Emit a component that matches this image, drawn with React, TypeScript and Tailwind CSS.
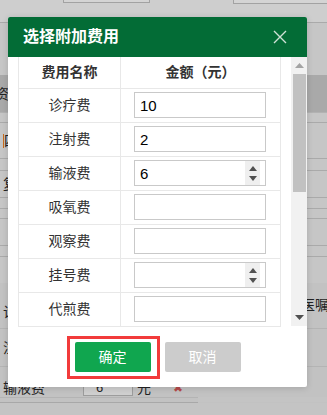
import React from 'react';

interface FeeRow {
    name: string;
    value: string;
    spin?: boolean;
}

const rows: FeeRow[] = [
    { name: '诊疗费', value: '10' },
    { name: '注射费', value: '2' },
    { name: '输液费', value: '6', spin: true },
    { name: '吸氧费', value: '' },
    { name: '观察费', value: '' },
    { name: '挂号费', value: '', spin: true },
    { name: '代煎费', value: '' },
];

const Spinner: React.FC = () => (
    <div className="absolute right-[6px] top-px bottom-px w-[15px] bg-[#efefef] flex flex-col items-center justify-center gap-[5px]">
        <svg width="8" height="5" viewBox="0 0 8 5"><path d="M0 5 L4 0 L8 5 Z" fill="#505050" /></svg>
        <svg width="8" height="5" viewBox="0 0 8 5"><path d="M0 0 L4 5 L8 0 Z" fill="#505050" /></svg>
    </div>
);

const Background: React.FC = () => (
    <div className="flex flex-col text-[14px] text-[#222] leading-none">
        {/* top inputs, mostly scrolled out */}
        <div className="h-[22px] bg-[#cecece] flex items-start">
            <div className="w-[63px]" />
            <div className="w-[87px] h-[3px] border-x border-b border-[#a2a2a2] bg-[#d4d4d4]" />
            <div className="w-[83px]" />
            <div className="flex-1 h-[4px] border-l border-b border-[#a2a2a2] bg-[#d4d4d4]" />
        </div>
        <div className="h-[53px] border-t border-[#aaaaaa] bg-[#c6c6c6]" />
        <div className="h-[37px] bg-[#a9a9a9] flex items-center">
            <span className="ml-[-5px]">资</span>
        </div>
        <div className="h-[10px] border-t border-[#b2b2b2] bg-[#c6c6c6]" />
        <div className="h-[36px] border-t border-[#aaaaaa] bg-[#c6c6c6] flex items-center pl-[3px]">
            <span className="border-l border-[#c86a1c]">四</span>
        </div>
        <div className="h-[12px] border-t border-[#aaaaaa] bg-[#c6c6c6]" />
        <div className="h-[27px] border-t border-[#aaaaaa] bg-[#c6c6c6] flex items-center pl-[3px]">
            <span>复</span>
        </div>
        <div className="h-[11px] border-t border-[#aaaaaa] bg-[#c6c6c6]" />
        <div className="h-[10px] border-t border-[#aaaaaa] bg-[#c6c6c6]" />
        <div className="h-[27px] border-t border-[#aaaaaa] bg-[#c6c6c6]" />
        <div className="h-[11px] border-t border-[#aaaaaa] bg-[#c6c6c6]" />
        <div className="h-[27px] border-t border-[#aaaaaa] bg-[#c6c6c6]" />
        <div className="h-[45px] bg-[#c2c2c2] flex items-start justify-between pt-[15px] pl-[3px]">
            <span className="mt-[7px]">诊</span>
            <span className="mr-[-2px]">医嘱</span>
        </div>
        <div className="h-[38px] border-t border-[#b4b4b4] bg-[#c2c2c2] flex items-center pl-[3px]">
            <span>注</span>
        </div>
        <div className="h-[31px] border-t border-[#b4b4b4] bg-[#c2c2c2] flex items-center pl-[3px] pt-[12px]">
            <span className="w-[80px]">输液费</span>
            <div className="w-[50px] h-[16px] border border-[#9c9c9c] bg-[#cfcfcf] pl-[12px] text-[13px]">6</div>
            <span className="ml-[4px]">元</span>
            <span className="ml-[22px] text-[#b54a4a] text-[12px]">✖</span>
        </div>
        <div className="h-[5px] border-t border-[#b4b4b4] bg-[#c2c2c2] w-[198px]" />
        <div className="flex-1 h-[13px] bg-[#c2c2c2]">
            <div className="w-[198px] h-full border-t border-r border-[#a8a8a8]" />
        </div>
    </div>
);

const App: React.FC = () => {
    return (
        <div className="relative w-[327px] h-[415px] overflow-hidden bg-[#c4c4c4] font-['Liberation_Sans','Noto_Sans_CJK_SC',sans-serif]">
            <Background />

            {/* dialog */}
            <div className="absolute left-[8px] top-[17px] w-[299px] h-[370px] bg-white rounded-[2px] shadow-[0_1px_6px_rgba(0,0,0,0.15)] flex flex-col overflow-hidden">
                <div className="h-[40px] bg-[#036c36] flex items-center justify-between pl-[15px] pr-[20px] shrink-0">
                    <span className="text-white text-[16px] font-bold tracking-[0px]">选择附加费用</span>
                    <svg width="14" height="14" viewBox="0 0 14 14">
                        <path d="M1 1 L13 13 M13 1 L1 13" stroke="#cfe1d6" strokeWidth="1.4" />
                    </svg>
                </div>

                <div className="h-[269px] flex shrink-0">
                    <div className="pl-[10px] pr-[10px] flex-1">
                        <table className="w-[263px] border-collapse text-[14px] text-[#333] table-fixed">
                            <colgroup>
                                <col className="w-[102px]" />
                                <col />
                            </colgroup>
                            <thead>
                                <tr className="h-[31px]">
                                    <th className="border-x border-b border-[#e8e8e8] font-bold">费用名称</th>
                                    <th className="border-x border-b border-[#e8e8e8] font-bold">金额（元）</th>
                                </tr>
                            </thead>
                            <tbody>
                                {rows.map(r => (
                                    <tr key={r.name} className="h-[34px]">
                                        <td className="border border-[#e8e8e8] text-center">{r.name}</td>
                                        <td className="border border-[#e8e8e8] pl-[13px] pr-[14px]">
                                            <div className="relative">
                                                <input
                                                    type="text"
                                                    defaultValue={r.value}
                                                    className="block w-[132px] h-[26px] border border-[#c9c9c9] bg-white pl-[5px] text-[15px] text-black outline-none"
                                                />
                                                {r.spin && <Spinner />}
                                            </div>
                                        </td>
                                    </tr>
                                ))}
                            </tbody>
                        </table>
                    </div>
                    {/* scrollbar */}
                    <div className="w-[17px] bg-[#f1f1f1] flex flex-col items-center shrink-0">
                        <div className="h-[17px] flex items-center justify-center">
                            <svg width="9" height="5" viewBox="0 0 9 5"><path d="M0 5 L4.5 0 L9 5 Z" fill="#a3a3a3" /></svg>
                        </div>
                        <div className="w-[13px] h-[118px] bg-[#c1c1c1]" />
                        <div className="flex-1" />
                        <div className="h-[17px] flex items-center justify-center">
                            <svg width="9" height="5" viewBox="0 0 9 5"><path d="M0 0 L4.5 5 L9 0 Z" fill="#505050" /></svg>
                        </div>
                    </div>
                </div>

                <div className="flex-1 flex items-start justify-center gap-[14px] pt-[16px]">
                    <div className="relative">
                        <button className="w-[76px] h-[30px] bg-[#10a64f] text-white text-[14px] rounded-[2px]">确定</button>
                        <div className="absolute -left-[8px] -right-[9px] -top-[6px] -bottom-[7px] border-[3px] border-[#f23b3b]" />
                    </div>
                    <button className="w-[76px] h-[30px] bg-[#cccccc] text-white text-[14px] rounded-[2px]">取消</button>
                </div>
            </div>
        </div>
    );
};

export default App;
